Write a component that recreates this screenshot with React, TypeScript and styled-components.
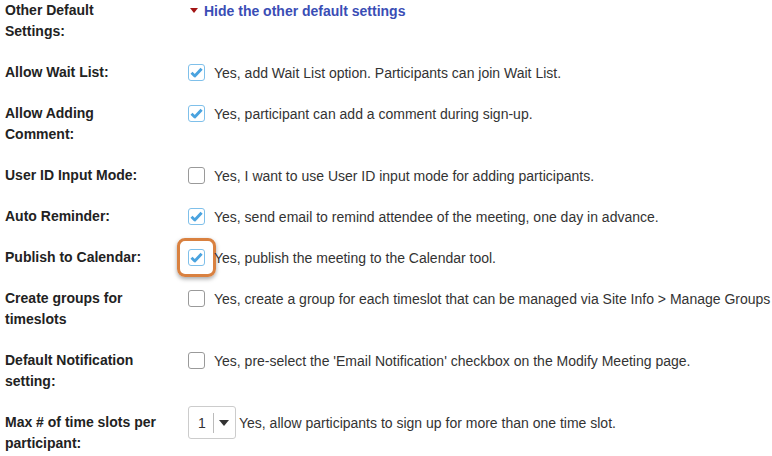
import React from 'react'
import styled, { createGlobalStyle } from 'styled-components'

const GlobalStyle = createGlobalStyle`
  body {
    margin: 0;
    background: #fff;
    font-family: "Liberation Sans", Arial, sans-serif;
  }
`

type Setting = {
  label: string
  text: string
  checked?: boolean
  highlight?: boolean
  select?: boolean
}

const settings: Setting[] = [
  { label: 'Allow Wait List:', text: 'Yes, add Wait List option. Participants can join Wait List.', checked: true },
  { label: 'Allow Adding Comment:', text: 'Yes, participant can add a comment during sign-up.', checked: true },
  { label: 'User ID Input Mode:', text: 'Yes, I want to use User ID input mode for adding participants.' },
  { label: 'Auto Reminder:', text: 'Yes, send email to remind attendee of the meeting, one day in advance.', checked: true },
  { label: 'Publish to Calendar:', text: 'Yes, publish the meeting to the Calendar tool.', checked: true, highlight: true },
  { label: 'Create groups for timeslots', text: 'Yes, create a group for each timeslot that can be managed via Site Info > Manage Groups' },
  { label: 'Default Notification setting:', text: "Yes, pre-select the 'Email Notification' checkbox on the Modify Meeting page." },
  { label: 'Max # of time slots per participant:', text: 'Yes, allow participants to sign up for more than one time slot.', select: true },
]

function CheckMark() {
  return (
    <svg width="13" height="11" viewBox="0 0 13 11">
      <path d="M1.5 5.8 L4.8 9 L11.6 1.8" fill="none" stroke="#4aa3df" strokeWidth="2.9" strokeLinejoin="round" />
    </svg>
  )
}

function App() {
  return (
    <Page>
      <GlobalStyle />
      <Row>
        <Label>
          Other Default
          <br />
          Settings:
        </Label>
        <Field>
          <Toggle href="#">
            <Caret />
            Hide the other default settings
          </Toggle>
        </Field>
      </Row>
      {settings.map((s) => (
        <Row key={s.label}>
          <Label>{s.label}</Label>
          <Field>
            {s.select ? (
              <Select>
                <SelectValue>1</SelectValue>
                <SelectArrow />
              </Select>
            ) : (
              <BoxWrap $highlight={s.highlight}>
                <Box $checked={s.checked}>{s.checked && <CheckMark />}</Box>
              </BoxWrap>
            )}
            <FieldText $gap={s.highlight ? -2 : s.select ? 3 : 9}>{s.text}</FieldText>
          </Field>
        </Row>
      ))}
    </Page>
  )
}

export default App

const Page = styled.div`
  display: flex;
  flex-direction: column;
  gap: 20px;
  padding: 0 0 0 5px;
  width: 772px;
  box-sizing: border-box;
`

const Row = styled.div`
  display: flex;
  align-items: flex-start;
`

const Label = styled.div`
  width: 156px;
  flex-shrink: 0;
  margin-right: 27px;
  font-size: 14px;
  font-weight: bold;
  line-height: 21px;
  color: #222;
`

const Field = styled.div`
  display: flex;
  align-items: center;
  height: 21px;
  font-size: 14px;
  color: #333;
  white-space: nowrap;
`

const Toggle = styled.a`
  display: flex;
  align-items: center;
  font-weight: bold;
  color: #3a4db5;
  text-decoration: none;
  margin-left: 2px;
`

const Caret = styled.span`
  width: 0;
  height: 0;
  border-left: 4.5px solid transparent;
  border-right: 4.5px solid transparent;
  border-top: 5px solid #a31515;
  margin-right: 6px;
`

const BoxWrap = styled.div<{ $highlight?: boolean }>`
  display: flex;
  align-items: center;
  justify-content: center;
  ${(p) =>
    p.$highlight
      ? `
    margin: -9px 0 -9px -11px;
    padding: 8px;
    border: 3px solid #d98140;
    border-radius: 8px;
    box-shadow: 0 2px 4px rgba(0, 0, 0, 0.35);
  `
      : ''}
`

const Box = styled.span<{ $checked?: boolean }>`
  display: flex;
  align-items: center;
  justify-content: center;
  width: 15px;
  height: 15px;
  border: 1px solid ${(p) => (p.$checked ? '#7fc0ea' : '#9a9a9a')};
  border-radius: 3px;
  background: #fff;
`

const FieldText = styled.span<{ $gap: number }>`
  margin-left: ${(p) => p.$gap}px;
`

const Select = styled.div`
  display: flex;
  align-items: center;
  flex-shrink: 0;
  width: 48px;
  height: 33px;
  border: 1px solid #ccc;
  border-radius: 3px;
  box-sizing: border-box;
`

const SelectValue = styled.span`
  width: 25px;
  padding-left: 9px;
  box-sizing: border-box;
  border-right: 1px solid #bbb;
  line-height: 20px;
  color: #333;
`

const SelectArrow = styled.span`
  margin-left: 5px;
  width: 0;
  height: 0;
  border-left: 5px solid transparent;
  border-right: 5px solid transparent;
  border-top: 6px solid #333;
`
